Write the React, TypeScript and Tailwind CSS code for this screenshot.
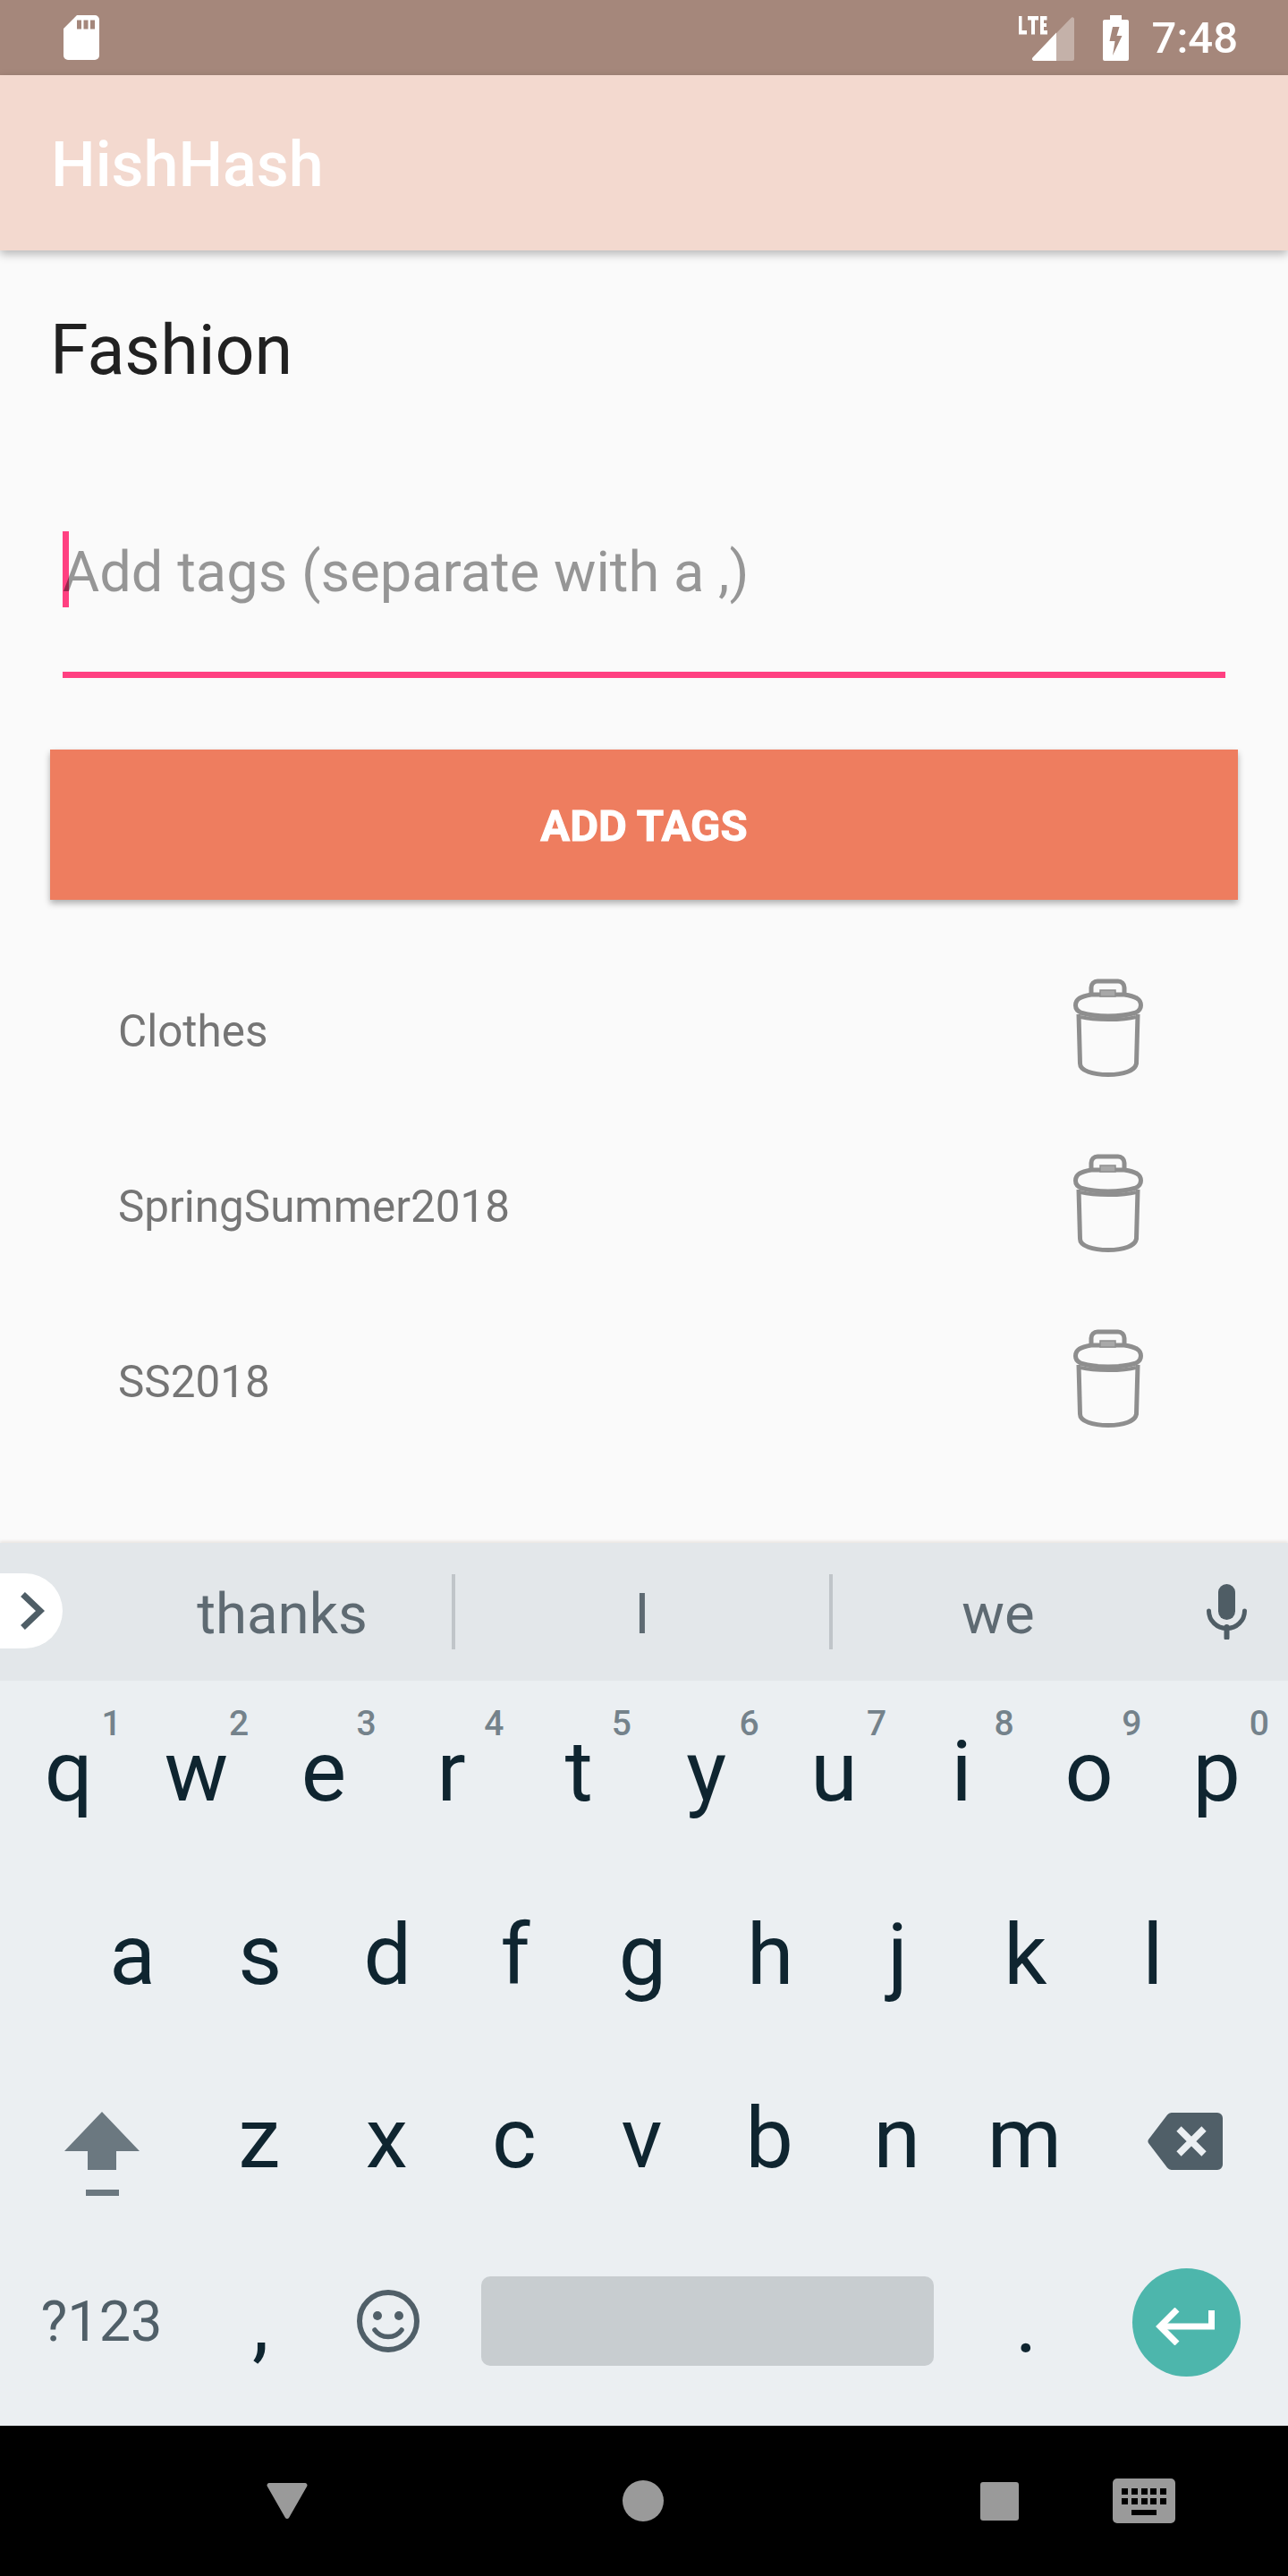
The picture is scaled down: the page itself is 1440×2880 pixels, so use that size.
import React from "react";

const font = "font-['Roboto',sans-serif]";

const digits = ["1", "2", "3", "4", "5", "6", "7", "8", "9", "0"];
const topRow = ["q", "w", "e", "r", "t", "y", "u", "i", "o", "p"];
const midRow = ["a", "s", "d", "f", "g", "h", "j", "k", "l"];
const lowRow = ["z", "x", "c", "v", "b", "n", "m"];
const tags = ["Clothes", "SpringSummer2018", "SS2018"];

const SdIcon = () => (
  <svg width="40" height="50" viewBox="0 0 40 50" fill="#fff">
    <path
      fillRule="evenodd"
      d="M15 0h20a5 5 0 0 1 5 5v40a5 5 0 0 1-5 5H5a5 5 0 0 1-5-5V15L15 0zM15 5.500v10h5v-10h-5zM22.500 5.500v10h5v-10h-5zM30 5.500v10h5v-10h-5z"
    />
  </svg>
);

const SignalIcon = () => (
  <svg width="62" height="51" viewBox="0 0 62 51" className="block">
    <path d="M59 2.500a2 2 0 0 1 3 1.500v45a2 2 0 0 1-2 2H17a2 2 0 0 1-1.500-3.400z" fill="#fff" fillOpacity="0.35" />
    <path d="M42 19.500V51H17a2 2 0 0 1-1.500-3.400z" fill="#fff" />
    <path d="M0 1h3.500v16H9v4.500H0zM10 1h12v4.500h-4V21.500h-4V5.500h-4zM24 1h7.500v4.500H28v3.500h3v4h-3v4h4v4.500h-8z" fill="#fff" />
  </svg>
);

const BatteryIcon = () => (
  <svg width="29" height="51" viewBox="0 0 29 51" fill="#fff">
    <path
      fillRule="evenodd"
      d="M8 0h13v5h6a2 2 0 0 1 2 2v42a2 2 0 0 1-2 2H2a2 2 0 0 1-2-2V7a2 2 0 0 1 2-2h6zM11 13l-3.500 16h6l-2.500 16 10.500-22h-6l3-10z"
    />
  </svg>
);

const TrashIcon = () => (
  <svg width="78" height="110" viewBox="0 0 78 110" fill="none" stroke="#8e8e8e" strokeWidth="5" className="block">
    <path d="M20 19V10a7 7 0 0 1 7-7h23a7 7 0 0 1 7 7v9" />
    <path d="M20 18C8 20 2.500 23 2.500 30c0 4 3 7 7 8.500C18 41 28 42 39 42s21-1 29.500-3.500c4-1.500 7-4.500 7-8.500 0-7-5.500-10-18.500-12z" strokeLinejoin="round" />
    <rect x="30" y="13" width="17" height="7" fill="#a8a8a8" strokeWidth="1.500" />
    <path d="M6 40l1.500 55c0 8 14 12.500 31.500 12.500s30-4.500 31.500-12.500L72 40" />
    <path d="M8 43c8 2 18 3 31 3s24-1 31-3" strokeWidth="4" />
  </svg>
);

const ChevronIcon = () => (
  <svg width="27" height="42" viewBox="0 0 27 42" fill="none" stroke="#4f5e66" strokeWidth="7">
    <path d="M2.500 2.500L22 21 2.500 39.500" />
  </svg>
);

const MicIcon = () => (
  <svg width="45" height="62" viewBox="0 0 45 62" fill="#4f5d65">
    <rect x="13" y="0" width="19" height="40" rx="9.500" />
    <path d="M2.500 30c0 11 9 19.500 20 19.500s20-8.500 20-19.500" fill="none" stroke="#4f5d65" strokeWidth="5" strokeLinecap="round" />
    <path d="M22.500 48v12" fill="none" stroke="#4f5d65" strokeWidth="6" strokeLinecap="round" />
  </svg>
);

const ShiftIcon = () => (
  <svg width="84" height="94" viewBox="0 0 84 94" fill="#6b7880">
    <path d="M42 0l42 44H58v21H26V44H0z" />
    <rect x="24" y="87" width="37" height="7" />
  </svg>
);

const BackspaceIcon = () => (
  <svg width="84" height="64" viewBox="0 0 84 64">
    <path d="M27 0h51a6 6 0 0 1 6 6v52a6 6 0 0 1-6 6H27a6 6 0 0 1-5-2.500L1 34a4 4 0 0 1 0-4L22 2.500A6 6 0 0 1 27 0z" fill="#505f68" />
    <path d="M35 18l28 28M63 18L35 46" stroke="#ebeff2" strokeWidth="7.500" />
  </svg>
);

const SmileIcon = () => (
  <svg width="70" height="70" viewBox="0 0 70 70" fill="none">
    <circle cx="35" cy="35" r="32" stroke="#505f68" strokeWidth="6" />
    <circle cx="23" cy="29" r="5" fill="#505f68" />
    <circle cx="47" cy="29" r="5" fill="#505f68" />
    <path d="M20 45c3.500 5 9 7.500 15 7.500s11.500-2.500 15-7.500" stroke="#505f68" strokeWidth="5.500" strokeLinecap="round" />
  </svg>
);

const EnterIcon = () => (
  <svg width="66" height="42" viewBox="0 0 66 42" fill="none" stroke="#fff" strokeWidth="7" className="mt-[8px] mr-[3px]">
    <path d="M62.500 3v18H6" />
    <path d="M24 2L5 21l19 19" />
  </svg>
);

const KeyboardIcon = () => (
  <svg width="70" height="50" viewBox="0 0 70 50">
    <rect width="70" height="50" rx="5" fill="#9a9a9a" />
    <g fill="#000">
      <rect x="10" y="11" width="7" height="7" />
      <rect x="21" y="11" width="7" height="7" />
      <rect x="32" y="11" width="7" height="7" />
      <rect x="42" y="11" width="7" height="7" />
      <rect x="53" y="11" width="7" height="7" />
      <rect x="10" y="22" width="7" height="7" />
      <rect x="21" y="22" width="7" height="7" />
      <rect x="32" y="22" width="7" height="7" />
      <rect x="42" y="22" width="7" height="7" />
      <rect x="53" y="22" width="7" height="7" />
      <rect x="21" y="35" width="28" height="6" />
    </g>
  </svg>
);

const Key = ({ label, hint }: { label: string; hint?: string }) => (
  <div className="relative w-[142.6px] h-full pr-[3px] text-center text-[95px] leading-[203px] text-[#0f2530]">
    {label}
    {hint && (
      <span className="absolute right-[14px] top-[25px] text-[39px] leading-[46px] font-medium text-[#74828b]">
        {hint}
      </span>
    )}
  </div>
);

const App: React.FC = () => {
  return (
    <div className={`w-[1440px] h-[2880px] flex flex-col overflow-hidden bg-[#fafafa] ${font}`}>
      {/* status bar */}
      <div className="h-[84px] shrink-0 bg-[#a5877b] flex items-center justify-between pl-[71px] pr-[56px] text-white">
        <SdIcon />
        <div className="flex items-center">
          <SignalIcon />
          <div className="ml-[32px]">
            <BatteryIcon />
          </div>
          <span className="ml-[26px] pt-[2px] text-[49px] leading-[84px] font-medium">7:48</span>
        </div>
      </div>

      {/* app bar */}
      <div className="relative z-10 h-[196px] shrink-0 bg-[#f3d9cf] flex items-center pl-[57px] pt-[5px] shadow-[0_4px_10px_rgba(0,0,0,0.28)]">
        <span className="text-[70px] font-medium text-white">HishHash</span>
      </div>

      {/* content */}
      <div className="flex-1 flex flex-col">
        <h1 className="pl-[56px] pt-[62px] text-[77.2px] leading-[100px] font-normal text-[#212121]">Fashion</h1>

        <div className="relative mx-[70px] mt-[152px] h-[164px] border-b-[7px] border-[#ff4081]">
          <div className="absolute left-0 top-0 w-[7px] h-[85px] bg-[#ff4081]" />
          <div className="relative pt-[5px] text-[63.2px] leading-[80px] text-black/40">Add tags (separate with a ,)</div>
        </div>

        <div className="mx-[56px] mt-[80px] h-[168px] pt-[4px] bg-[#ee7d5f] flex items-center justify-center text-white text-[49px] font-bold [-webkit-text-stroke:1px_#fff] shadow-[0_4px_7px_rgba(0,0,0,0.3)]">
          ADD TAGS
        </div>

        <div className="mt-[48px] flex flex-col">
          {tags.map((tag) => (
            <div key={tag} className="h-[196px] flex items-center justify-between pl-[132px] pr-[162px]">
              <span className="mt-[2px] text-[49.4px] text-[#757575]">{tag}</span>
              <div className="mb-[6px]">
                <TrashIcon />
              </div>
            </div>
          ))}
        </div>
      </div>

      {/* keyboard */}
      <div className="shrink-0 h-[987px] flex flex-col bg-[#ebeff2]">
        <div className="relative h-[154px] shrink-0 bg-[#e3e7ea] flex items-center pl-[126px] text-[63.6px] text-[#5e6a72] shadow-[0_-2px_3px_rgba(120,80,60,0.12)]">
          <div className="absolute left-0 top-[34px] w-[70px] h-[84px] bg-white rounded-r-[42px] flex items-center pl-[23px]">
            <ChevronIcon />
          </div>
          <div className="w-[383px] h-[84px] leading-[90px] text-center border-r-[4px] border-[#c0c5c9]">thanks</div>
          <div className="w-[422px] h-[84px] leading-[90px] text-center border-r-[4px] border-[#c0c5c9]">I</div>
          <div className="w-[370px] h-[84px] leading-[90px] text-center">we</div>
          <div className="flex-1 flex justify-center pl-[2px]">
            <MicIcon />
          </div>
        </div>

        <div className="flex-1 px-[7px] flex flex-col">
          <div className="h-[205px] flex">
            {topRow.map((k, i) => (
              <Key key={k} label={k} hint={digits[i]} />
            ))}
          </div>
          <div className="h-[205px] flex justify-center">
            {midRow.map((k) => (
              <Key key={k} label={k} />
            ))}
          </div>
          <div className="h-[205px] flex">
            <div className="w-[213px] flex items-center justify-center">
              <div className="mt-[32px]">
                <ShiftIcon />
              </div>
            </div>
            {lowRow.map((k) => (
              <Key key={k} label={k} />
            ))}
            <div className="flex-1 flex items-center justify-center">
              <div className="mt-[5px] mr-[2px]">
                <BackspaceIcon />
              </div>
            </div>
          </div>
          <div className="h-[205px] pb-[3px] flex items-center">
            <div className="w-[213px] pt-[2px] text-center text-[63px] text-[#505f68]">?123</div>
            <div className="w-[142.6px] mt-[3px] text-center text-[95px] leading-[110px] text-[#0f2530]">,</div>
            <div className="w-[142.6px] flex justify-center">
              <SmileIcon />
            </div>
            <div className="flex-1 px-[33px]">
              <div className="h-[100px] bg-[#c8cdd0] rounded-[10px]" />
            </div>
            <div className="w-[142.6px] mt-[3px] pr-[3px] text-center text-[95px] leading-[110px] text-[#0f2530]">.</div>
            <div className="w-[213px] mt-[3px] flex justify-center">
              <div className="w-[121px] h-[121px] rounded-full bg-[#4db6ac] flex items-center justify-center">
                <EnterIcon />
              </div>
            </div>
          </div>
        </div>
      </div>

      {/* nav bar */}
      <div className="h-[168px] shrink-0 bg-black flex items-center">
        <div className="w-[344px] flex justify-end">
          <svg width="46" height="41" viewBox="0 0 46 41" fill="#9a9a9a">
            <path d="M3 0h40a2.500 2.500 0 0 1 2.300 3.500L25 39a2.500 2.500 0 0 1-4 0L.7 3.500A2.500 2.500 0 0 1 3 0z" />
          </svg>
        </div>
        <div className="ml-[352px] w-[46px] h-[46px] rounded-full bg-[#9a9a9a]" />
        <div className="ml-[354px] w-[43px] h-[43px] rounded-[3px] bg-[#9a9a9a]" />
        <div className="ml-[105px]">
          <KeyboardIcon />
        </div>
      </div>
    </div>
  );
};

export default App;
